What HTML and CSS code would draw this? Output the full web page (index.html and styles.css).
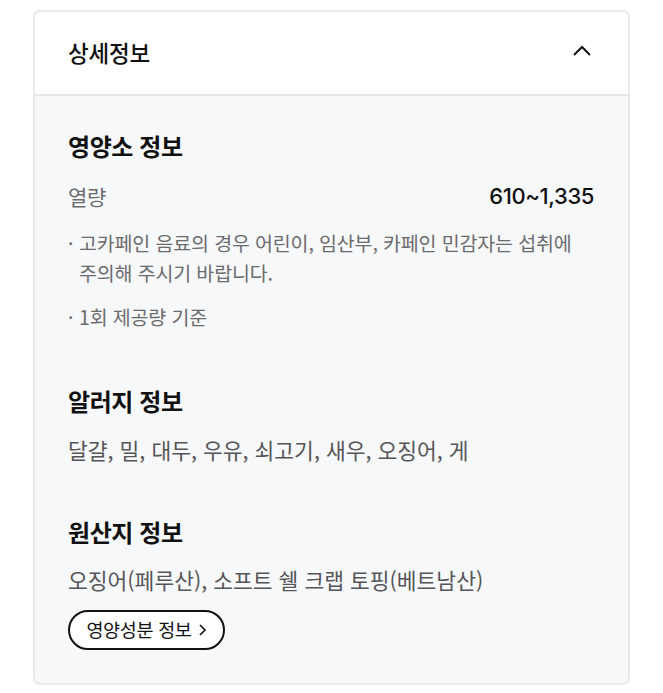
FILE: index.html
```html
<!DOCTYPE html>
<html lang="ko">
<head>
<meta charset="utf-8">
<link rel="stylesheet" href="styles.css">
</head>
<body>
<div class="card">
  <div class="card-head">
    <span class="head-title">상세정보</span>
    <svg class="chev" width="20" height="12" viewBox="0 0 20 12"><path d="M2 10 L10 2 L18 10" fill="none" stroke="#111" stroke-width="2"/></svg>
  </div>
  <div class="card-body">
    <section class="sec sec-nutri">
      <h2 class="sec-title">영양소 정보</h2>
      <div class="row">
        <span class="row-label">열량</span>
        <span class="row-value">610~1,335</span>
      </div>
      <ul class="notes">
        <li class="note">고카페인 음료의 경우 어린이, 임산부, 카페인 민감자는 섭취에 주의해 주시기 바랍니다.</li>
        <li class="note note-gap">1회 제공량 기준</li>
      </ul>
    </section>
    <section class="sec sec-allergy">
      <h2 class="sec-title">알러지 정보</h2>
      <p class="sec-text">달걀, 밀, 대두, 우유, 쇠고기, 새우, 오징어, 게</p>
    </section>
    <section class="sec sec-origin">
      <h2 class="sec-title">원산지 정보</h2>
      <p class="sec-text">오징어(페루산), 소프트 쉘 크랩 토핑(베트남산)</p>
      <button class="pill">영양성분 정보 <svg width="9" height="14" viewBox="0 0 9 14"><path d="M2 2 L7 7 L2 12" fill="none" stroke="#111" stroke-width="1.6"/></svg></button>
    </section>
  </div>
</div>
</body>
</html>
```
FILE: styles.css
```css
* { box-sizing: border-box; }
html, body { margin: 0; padding: 0; background: #fff; }
body {
  font-family: "Inter", "Noto Sans CJK KR", sans-serif;
  color: #111;
  padding: 10px 33px 0 33px;
  word-break: keep-all;
}
.card {
  width: 597px;
  height: 675px;
  border: 2px solid #e9e9eb;
  border-radius: 7px;
  overflow: hidden;
  background: #f7f8fa;
  display: flex;
  flex-direction: column;
}
.card-head {
  height: 84px;
  flex: none;
  background: #fff;
  border-bottom: 2px solid #e6e6e8;
  display: flex;
  align-items: center;
  justify-content: space-between;
  padding: 0 36px 0 33px;
}
.head-title {
  font-family: "Noto Sans CJK KR", sans-serif;
  font-size: 22.5px;
  font-weight: 500;
  letter-spacing: -0.2px;
  line-height: 30px;
  margin-top: -2px;
}
.chev { display: block; margin-top: -4px; }
.card-body {
  padding: 35px 33px 0 33px;
}
.sec-title {
  margin: 0;
  font-family: "Noto Sans CJK KR", sans-serif;
  font-size: 24px;
  font-weight: 700;
  line-height: 30px;
  letter-spacing: -0.4px;
}
.row {
  margin-top: 21px;
  display: flex;
  justify-content: space-between;
  align-items: center;
  height: 28px;
  padding-right: 1px;
}
.row-label {
  font-family: "Noto Sans CJK KR", sans-serif;
  font-size: 21px;
  color: #6b6b6e;
  letter-spacing: -0.3px;
}
.row-value {
  font-family: "Inter", sans-serif;
  font-size: 22px;
  font-weight: 500;
  letter-spacing: -0.4px;
  color: #111;
}
.notes {
  list-style: none;
  margin: 18px 0 0 0;
  padding: 0;
}
.note {
  position: relative;
  padding-left: 11px;
  font-family: "Noto Sans CJK KR", sans-serif;
  font-size: 19.5px;
  line-height: 30px;
  color: #6b6b6e;
  letter-spacing: -0.15px;
  word-break: keep-all;
}
.note::before {
  content: "·";
  position: absolute;
  left: 0;
  top: 0;
}
.note-gap { margin-top: 14px; }
.sec-allergy { margin-top: 54px; }
.sec-origin { margin-top: 53px; }
.sec-text {
  margin: 20px 0 0 0;
  font-family: "Noto Sans CJK KR", sans-serif;
  font-size: 21.5px;
  line-height: 28px;
  color: #555558;
  letter-spacing: 0;
}
.sec-origin .sec-text { margin-top: 19px; }
.pill {
  margin-top: 16px;
  height: 40px;
  width: 157px;
  border: 2px solid #111;
  border-radius: 20px;
  background: #fff;
  font-family: "Noto Sans CJK KR", sans-serif;
  font-size: 18.5px;
  color: #111;
  letter-spacing: -0.3px;
  display: flex;
  align-items: center;
  justify-content: center;
  gap: 6px;
  padding: 0 0 2px 0;
}
.pill svg { display: block; margin-top: 2px; }
```
